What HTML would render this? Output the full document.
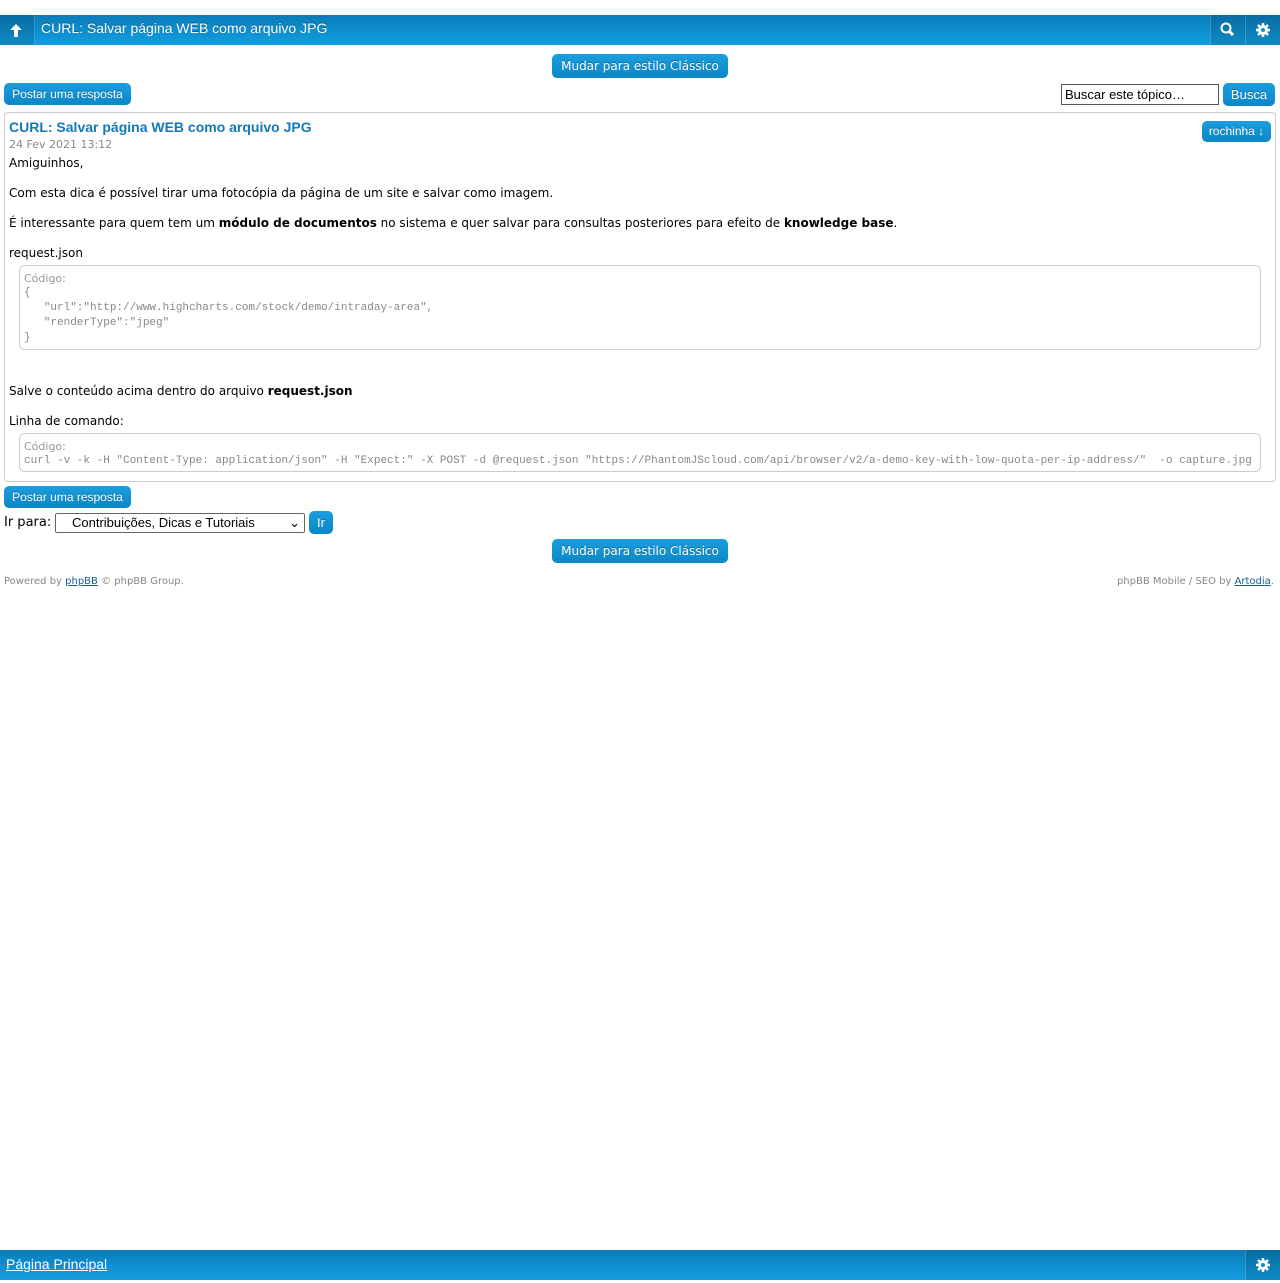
<!DOCTYPE html>
<html><head><meta charset="utf-8"><style>
body{margin:0;width:1280px;height:1280px;position:relative;background:#fff;font-family:"DejaVu Sans",Verdana,sans-serif;font-size:12px;color:#000;overflow:hidden}
.bar{position:absolute;left:0;width:1280px;height:30px;background:linear-gradient(#0a7cba,#129ee0);}
.btn{position:absolute;background:linear-gradient(#1a9fe0,#0c86c6);color:#fff;border-radius:5px;font-family:"Liberation Sans",Arial,sans-serif;text-shadow:0 -1px 0 rgba(0,0,0,.3)}
.abs{position:absolute;white-space:nowrap}
.code{position:absolute;left:19px;width:1242px;border:1px solid #ccc;border-radius:6px;font-family:"Liberation Mono",monospace;font-size:11px;color:#888;line-height:15px}
.code .h{font-family:"DejaVu Sans",Verdana,sans-serif;font-size:11px;color:#999}
.ic{position:absolute;top:0;width:34px;height:30px;background:rgba(0,0,0,.12);border-left:1px solid rgba(255,255,255,.2)}
</style></head><body>
<div class="bar" style="top:15px">
 <div class="ic" style="left:0;border:0;border-right:1px solid rgba(255,255,255,.2)"><svg width="34" height="30"><path d="M16 9l-6 6h4v7h4v-7h4z" fill="#fff"/></svg></div>
 <div class="abs" style="left:41px;top:5px;color:#fff;font-family:'Liberation Sans',Arial,sans-serif;font-size:14px;text-shadow:0 -1px 0 rgba(0,0,0,.3)">CURL: Salvar página WEB como arquivo JPG</div>
 <div class="ic" style="left:1210px"><svg width="34" height="30"><circle cx="15" cy="13" r="4.5" stroke="#fff" stroke-width="2" fill="none"/><path d="M18 16l4 4" stroke="#fff" stroke-width="3"/></svg></div>
 <div class="ic" style="left:1245px"><svg width="34" height="30"><circle cx="17" cy="15" r="5" fill="#fff"/><path d="M17 8v14M10 15h14M12 10l10 10M22 10l-10 10" stroke="#fff" stroke-width="2.5"/><circle cx="17" cy="15" r="2" fill="#0f8fd0"/></svg></div>
</div>
<div class="btn" style="left:552px;top:54px;width:176px;height:24px;line-height:24px;text-align:center;font-family:'DejaVu Sans',Verdana,sans-serif;font-size:12px">Mudar para estilo Clássico</div>
<div class="btn" style="left:4px;top:83px;width:127px;height:22px;line-height:22px;text-align:center;font-size:12px">Postar uma resposta</div>
<div class="abs" style="left:1061px;top:84px;border:1px solid #555;font-family:'Liberation Sans',Arial,sans-serif;font-size:13px;line-height:19px;padding-left:3px;box-sizing:border-box;width:158px;height:21px">Buscar este tópico…</div>
<div class="btn" style="left:1223px;top:83px;width:52px;height:23px;line-height:23px;text-align:center;font-size:13px">Busca</div>
<div class="abs" style="left:4px;top:112px;width:1270px;height:368px;border:1px solid #ccc;border-radius:4px"></div>
<div class="abs" style="left:9px;top:119px;color:#1379b4;font-weight:bold;font-family:'Liberation Sans',Arial,sans-serif;font-size:14px">CURL: Salvar página WEB como arquivo JPG</div>
<div class="btn" style="left:1202px;top:121px;width:69px;height:21px;line-height:21px;text-align:center;font-size:12px">rochinha ↓</div>
<div class="abs" style="left:9px;top:138px;color:#888;font-size:11px">24 Fev 2021 13:12</div>
<div class="abs" style="left:9px;top:156px">Amiguinhos,</div>
<div class="abs" style="left:9px;top:186px">Com esta dica é possível tirar uma fotocópia da página de um site e salvar como imagem.</div>
<div class="abs" style="left:9px;top:216px">É interessante para quem tem um <b>módulo de documentos</b> no sistema e quer salvar para consultas posteriores para efeito de <b>knowledge base</b>.</div>
<div class="abs" style="left:9px;top:246px">request.json</div>
<div class="code" style="top:265px;height:85px;padding:5px 4px;box-sizing:border-box"><div class="h">Código:</div>{<br>&nbsp;&nbsp;&nbsp;"url":"http://www.highcharts.com/stock/demo/intraday-area",<br>&nbsp;&nbsp;&nbsp;"renderType":"jpeg"<br>}</div>
<div class="abs" style="left:9px;top:384px">Salve o conteúdo acima dentro do arquivo <b>request.json</b></div>
<div class="abs" style="left:9px;top:414px">Linha de comando:</div>
<div class="code" style="top:433px;height:39px;padding:5px 4px;box-sizing:border-box;white-space:nowrap;overflow:hidden"><div class="h">Código:</div>curl -v -k -H "Content-Type: application/json" -H "Expect:" -X POST -d @request.json "https://PhantomJScloud.com/api/browser/v2/a-demo-key-with-low-quota-per-ip-address/"&nbsp; -o capture.jpg</div>
<div class="btn" style="left:4px;top:486px;width:127px;height:22px;line-height:22px;text-align:center;font-size:12px">Postar uma resposta</div>
<div class="abs" style="left:4px;top:515px;font-size:13px">Ir para:</div>
<div class="abs" style="left:55px;top:513px;border:1px solid #666;border-radius:2px;box-sizing:border-box;width:250px;height:20px;font-family:'Liberation Sans',Arial,sans-serif;font-size:13px;line-height:18px;padding-left:16px">Contribuições, Dicas e Tutoriais<span style="position:absolute;right:4px;top:0">⌄</span></div>
<div class="btn" style="left:309px;top:511px;width:24px;height:23px;line-height:23px;text-align:center;font-size:13px">Ir</div>
<div class="btn" style="left:552px;top:539px;width:176px;height:24px;line-height:24px;text-align:center;font-family:'DejaVu Sans',Verdana,sans-serif;font-size:12px">Mudar para estilo Clássico</div>
<div class="abs" style="left:4px;top:576px;color:#888;font-size:10px">Powered by <u style="color:#1a5e8e">phpBB</u> © phpBB Group.</div>
<div class="abs" style="right:6px;top:576px;color:#888;font-size:10px">phpBB Mobile / SEO by <u style="color:#1a5e8e">Artodia</u>.</div>
<div class="bar" style="top:1250px">
 <div class="abs" style="left:6px;top:6px;color:#fff;font-family:'Liberation Sans',Arial,sans-serif;font-size:14px;text-decoration:underline">Página Principal</div>
 <div class="ic" style="left:1245px"><svg width="34" height="30"><circle cx="17" cy="15" r="5" fill="#fff"/><path d="M17 8v14M10 15h14M12 10l10 10M22 10l-10 10" stroke="#fff" stroke-width="2.5"/><circle cx="17" cy="15" r="2" fill="#0f8fd0"/></svg></div>
</div>
</body></html>
